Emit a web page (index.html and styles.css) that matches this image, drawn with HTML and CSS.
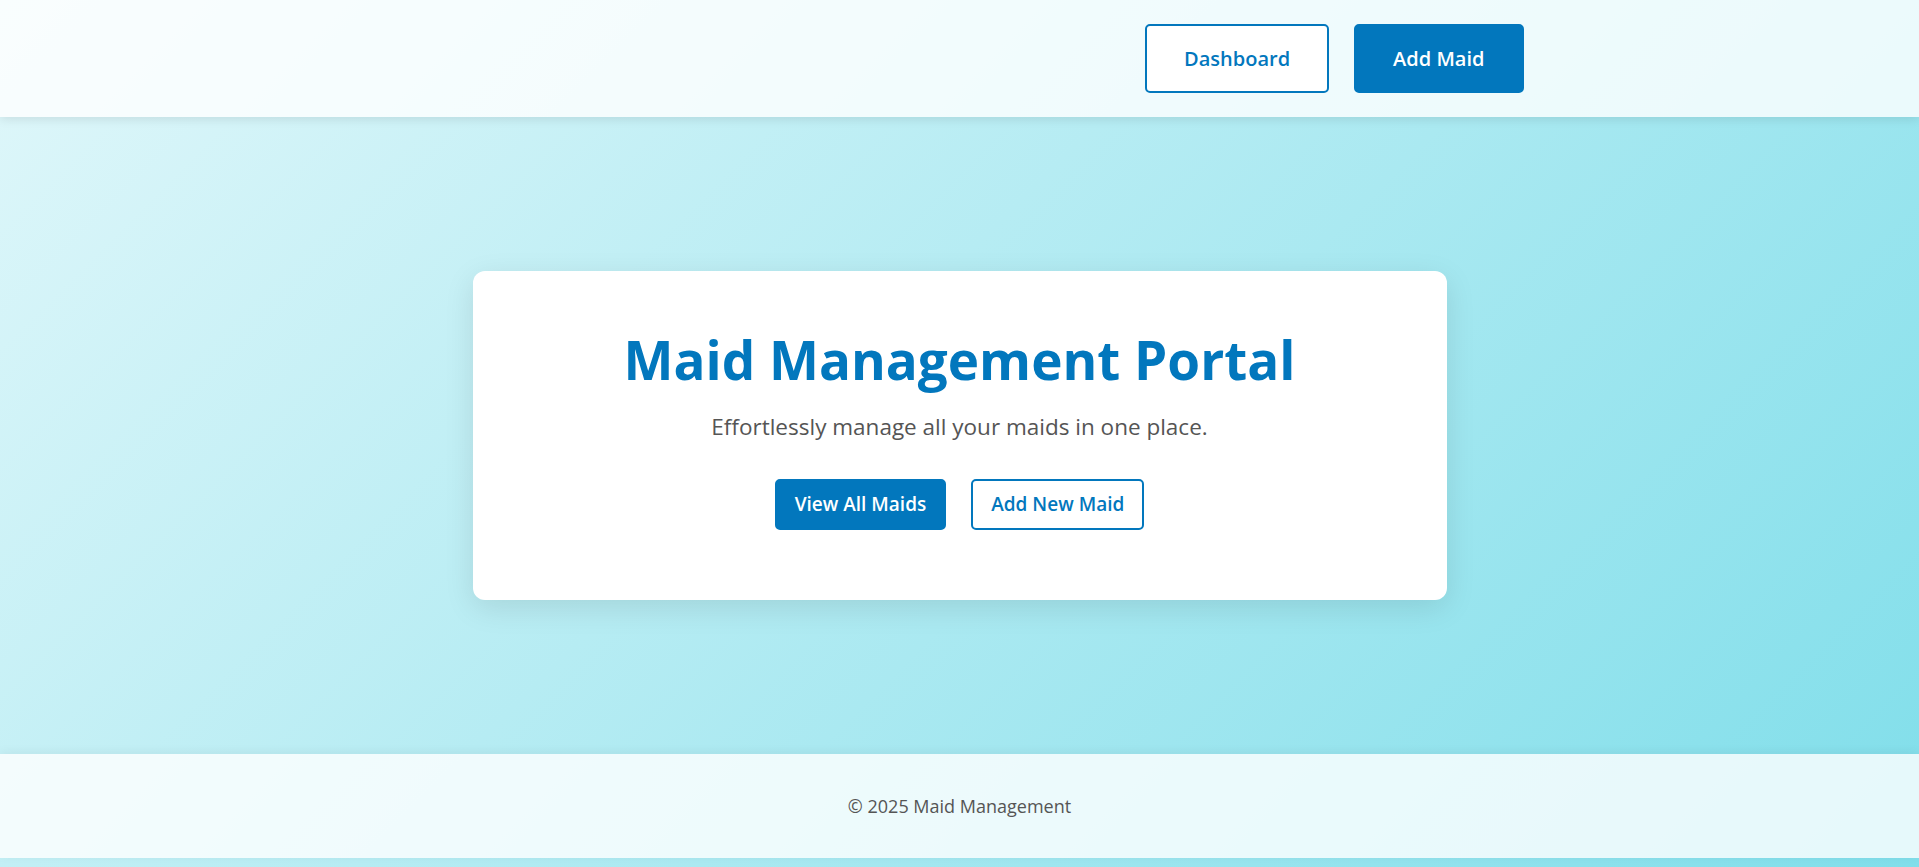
FILE: index.html
```html
<!DOCTYPE html>
<html lang="en">
<head>
<meta charset="utf-8">
<title>Maid Management Portal</title>
<link rel="stylesheet" href="styles.css">
</head>
<body>
  <header class="site-header">
    <div class="container nav">
      <div class="brand"></div>
      <nav class="nav-links">
        <a class="btn btn-outline btn-lg" href="#">Dashboard</a>
        <a class="btn btn-primary btn-lg" href="#">Add Maid</a>
      </nav>
    </div>
  </header>
  <main class="main">
    <section class="card">
      <h1 class="title">Maid Management Portal</h1>
      <p class="subtitle">Effortlessly manage all your maids in one place.</p>
      <div class="actions">
        <a class="btn btn-primary btn-md" href="#">View All Maids</a>
        <a class="btn btn-outline btn-md" href="#">Add New Maid</a>
      </div>
    </section>
  </main>
  <footer class="site-footer">
    <p class="copy">© 2025 Maid Management</p>
  </footer>
</body>
</html>
```
FILE: styles.css
```css
* { box-sizing: border-box; }

html, body { height: 100%; }

body {
  margin: 0;
  min-height: 100vh;
  display: flex;
  flex-direction: column;
  font-family: "Open Sans", "Noto Sans", "Liberation Sans", sans-serif;
  background: linear-gradient(135deg, #e0f7fa 0%, #80deea 100%);
  background-attachment: fixed;
  color: #333;
}

.container {
  width: 100%;
  max-width: 1200px;
  margin: 0 auto;
  padding: 0 36px;
}

.site-header {
  background: rgba(255, 255, 255, 0.8);
  box-shadow: 0 2px 10px rgba(0, 0, 0, 0.1);
  padding: 24px 0;
  position: relative;
  z-index: 1;
}

.nav {
  display: flex;
  justify-content: space-between;
  align-items: center;
}

.nav-links {
  display: flex;
  gap: 25px;
}

.btn {
  display: inline-flex;
  align-items: center;
  justify-content: center;
  text-decoration: none;
  font-weight: 600;
  border: 2px solid #0277bd;
  border-radius: 5px;
  white-space: nowrap;
}

.btn-primary {
  background: #0277bd;
  color: #fff;
}

.btn-outline {
  background: #fff;
  color: #0277bd;
}

.btn-lg {
  height: 69px;
  padding: 0 37px;
  font-size: 20px;
}

.btn-md {
  height: 51px;
  padding: 0 18px;
  font-size: 19px;
}

.main {
  flex: 1;
  display: flex;
  align-items: center;
  justify-content: center;
}

.card {
  width: 974px;
  background: #fff;
  border-radius: 12px;
  box-shadow: 0 8px 30px rgba(0, 0, 0, 0.1);
  padding: 55px 40px 70px;
  text-align: center;
}

.title {
  margin: 0;
  font-size: 53px;
  font-weight: 700;
  line-height: 1.3;
  color: #0277bd;
}

.subtitle {
  margin: 16px 0 36px;
  font-size: 22.5px;
  line-height: 1.4;
  color: #555;
}

.actions {
  display: flex;
  justify-content: center;
  gap: 25px;
}

.site-footer {
  height: 104px;
  margin-bottom: 9px;
  background: rgba(255, 255, 255, 0.8);
  box-shadow: 0 -2px 10px rgba(0, 0, 0, 0.05);
  display: flex;
  align-items: center;
  justify-content: center;
}

.copy {
  margin: 0;
  font-size: 18px;
  color: #555;
}
```
